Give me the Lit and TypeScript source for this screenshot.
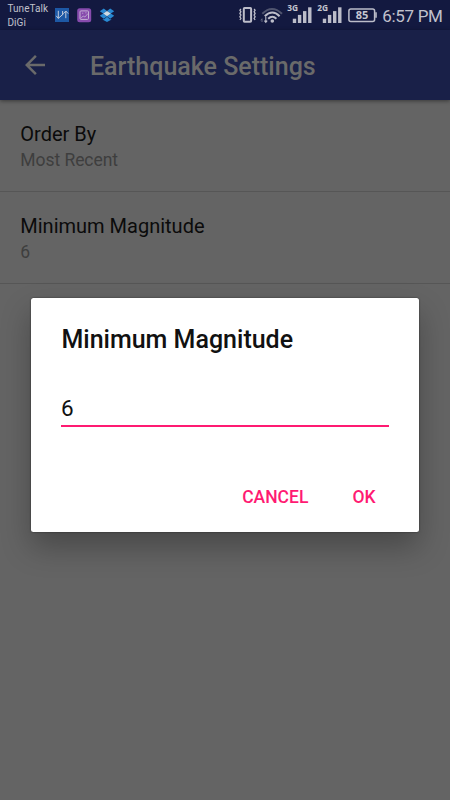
import { LitElement, html, css, svg } from "lit";
import { customElement, property } from "lit/decorators.js";

@customElement("status-bar")
class StatusBar extends LitElement {
  static styles = css`
    :host { display: flex; height: 30px; box-sizing: border-box; background: #131940; color: #c0c1cc; font-family: Roboto, sans-serif; }
    .carrier { width: 46.5px; margin-left: 7.5px; padding-top: 2px; font-size: 10px; line-height: 13px; letter-spacing: 0.05px; white-space: nowrap; }
    .carrier div { height: 13px; }
    .carrier div + div { margin-top: 1px; }
    .icons { width: 321px; height: 30px; flex: none; }
    .time { font-size: 17px; line-height: 32px; margin-left: 7.3px; letter-spacing: -0.33px; white-space: nowrap; }
    .net { font: 700 8px "Noto Sans", sans-serif; fill: #c6c7d1; }
    .level { font: 700 10px "Noto Sans", sans-serif; fill: #c6c7d1; }
  `;
  bars(x: number) {
    return [0, 1, 2, 3].map((i) => svg`<rect x=${x + i * 5.1} y=${18.7 - i * 3.8} width="3.4" height=${4.3 + i * 3.8} fill="#bcbdc9"/>`);
  }
  render() {
    return html`
      <div class="carrier"><div>TuneTalk</div><div>DiGi</div></div>
      <svg class="icons" viewBox="54 0 321 30" overflow="visible">
        <rect x="55" y="8" width="14" height="14" fill="#1d58a5"/>
        <path d="M58.3 10.8v7.5M56.2 15.8l2.1 2.6 5.2-4.6M60.7 16.4l1.9-2V11M65.8 18.2v-6.8M63.4 13.6l2.4-2.6 2.4 2.6" fill="none" stroke="#c0c9da" stroke-width="1"/>
        <rect x="77.2" y="8.2" width="14" height="14" rx="2.5" fill="#874bad"/>
        <rect x="80" y="10.9" width="8.5" height="8.5" rx="1" fill="none" stroke="#c5b2d6" stroke-width="1"/>
        <path d="M80.8 18.4l2.4-2.4 1.7 1 3-3.4M82 13.2h1.3M85.3 12.8h1.2" fill="none" stroke="#c5b2d6" stroke-width=".8"/>
        <path d="M99.8 11.3l4-2.9 3.2 2.7-3.8 2.5zM107 11.1l3.2-2.7 4 2.9-3.4 2.3zM99.8 15.7l3.4-2.1 3.8 2.6-3.2 2.6zM107 16.2l3.8-2.6 3.4 2.1-4 3.1zM102.8 18.9l1.1.5 3.1-2.6 3.1 2.6 1.1-.5v.8l-4.2 2.3-4.2-2.3z" fill="#2889d3"/>
        <path d="M103.2 13.6l3.8-2.5 3.8 2.5-3.8 2.6z" fill="#cbdce8"/>
        <g fill="none" stroke="#bcbdc9">
          <rect x="243.8" y="8" width="7.3" height="13.8" rx=".7" stroke-width="2"/>
          <path d="M240.9 9l-1 1.3 1 1.4-1 1.7 1 1.7-1 1.7 1 1.7-1 1.5M254.1 9l1 1.3-1 1.4 1 1.7-1 1.7 1 1.7-1 1.7 1 1.5" stroke-width="1.3"/>
          <path d="M262.3 13.8Q272 4.2 282 13.8" stroke="#50556f" stroke-width="2"/>
          <path d="M264.8 16.2Q272.3 8.7 279.6 16.2" stroke-width="2"/>
          <path d="M268.2 18.7Q272.3 14.6 276.4 18.7" stroke-width="2"/>
          <path d="M262 22v-3.2M260.8 20.3l1.2-1.6" stroke="#656980" stroke-width="1"/>
          <path d="M265.8 17v5.2M264.4 20.7l1.4 1.6 1.4-1.6" stroke-width="1.1"/>
          <rect x="348.9" y="8.9" width="25.7" height="12.5" rx="2" stroke-width="1.5"/>
        </g>
        <circle cx="272.3" cy="21" r="1.8" fill="#bcbdc9"/>
        <path d="M375.2 12.3h1.6v5.5h-1.6z" fill="#bcbdc9"/>
        ${this.bars(292.8)}${this.bars(322.8)}
        <text class="net" x="287.2" y="11" textLength="10.8" lengthAdjust="spacingAndGlyphs">3G</text>
        <text class="net" x="317.2" y="11" textLength="10.8" lengthAdjust="spacingAndGlyphs">2G</text>
        <text class="level" x="355.7" y="18.9" textLength="12.6" lengthAdjust="spacingAndGlyphs">85</text>
      </svg>
      <div class="time">6:57 PM</div>`;
  }
}

@customElement("app-bar")
class AppBar extends LitElement {
  static styles = css`
    :host { position: relative; display: flex; align-items: center; height: 70px; box-sizing: border-box; background: #192048; color: #6a6a6a; box-shadow: 0 1px 4px rgba(0, 0, 0, 0.45); font-family: Roboto, sans-serif; }
    svg { width: 30px; height: 30px; margin-left: 20px; flex: none; }
    h1 { margin: 3px 0 0 40px; font-size: 25px; font-weight: 500; line-height: 30px; white-space: nowrap; }
  `;
  render() {
    return html`
      <svg viewBox="0 0 24 24"><path d="M20 11H7.83l5.59-5.59L12 4l-8 8 8 8 1.41-1.41L7.83 13H20v-2z" fill="#6a6a6a"/></svg>
      <h1>Earthquake Settings</h1>`;
  }
}

@customElement("preference-row")
class PreferenceRow extends LitElement {
  @property() label = "";
  @property() value = "";
  static styles = css`
    :host { display: block; height: 92px; box-sizing: border-box; padding: 21px 20.3px 0; border-bottom: 1px solid #565656; font-family: Roboto, sans-serif; white-space: nowrap; }
    .label { color: #0b0b0b; font-size: 20px; line-height: 26px; }
    .value { color: #3e3e3e; font-size: 17.5px; line-height: 26px; letter-spacing: -0.05px; }
  `;
  render() {
    return html`<div class="label">${this.label}</div><div class="value">${this.value}</div>`;
  }
}

@customElement("edit-dialog")
class EditDialog extends LitElement {
  static styles = css`
    :host { display: flex; flex-direction: column; box-sizing: border-box; width: 388px; height: 233.5px; padding: 27px 30px 0; background: #fff; border-radius: 2.5px; box-shadow: 0 0 2px rgba(0, 0, 0, 0.55), 0 15px 30px rgba(0, 0, 0, 0.28); font-family: Roboto, sans-serif; }
    h2 { margin: 0; padding-left: 0.4px; color: #111; font-size: 25px; font-weight: 500; line-height: 30px; white-space: nowrap; }
    .field { height: 36px; margin-top: 36px; border-bottom: 2px solid #ff1a72; box-sizing: border-box; color: #111; font-size: 22.5px; line-height: 35px; }
    .actions { display: flex; justify-content: flex-end; gap: 44px; margin-top: 58px; padding-right: 13.5px; color: #ff1a72; font-size: 17.5px; font-weight: 500; line-height: 24px; }
  `;
  render() {
    return html`
      <h2>Minimum Magnitude</h2>
      <div class="field">6</div>
      <div class="actions"><span>CANCEL</span><span>OK</span></div>`;
  }
}

@customElement("app-root")
class AppRoot extends LitElement {
  static styles = css`
    :host { display: block; position: relative; width: 450px; height: 800px; overflow: hidden; background: #646464; }
    .overlay { position: absolute; left: 31px; top: 298px; }
  `;
  render() {
    return html`
      <status-bar></status-bar>
      <app-bar></app-bar>
      <preference-row label="Order By" value="Most Recent"></preference-row>
      <preference-row label="Minimum Magnitude" value="6"></preference-row>
      <edit-dialog class="overlay"></edit-dialog>`;
  }
}
